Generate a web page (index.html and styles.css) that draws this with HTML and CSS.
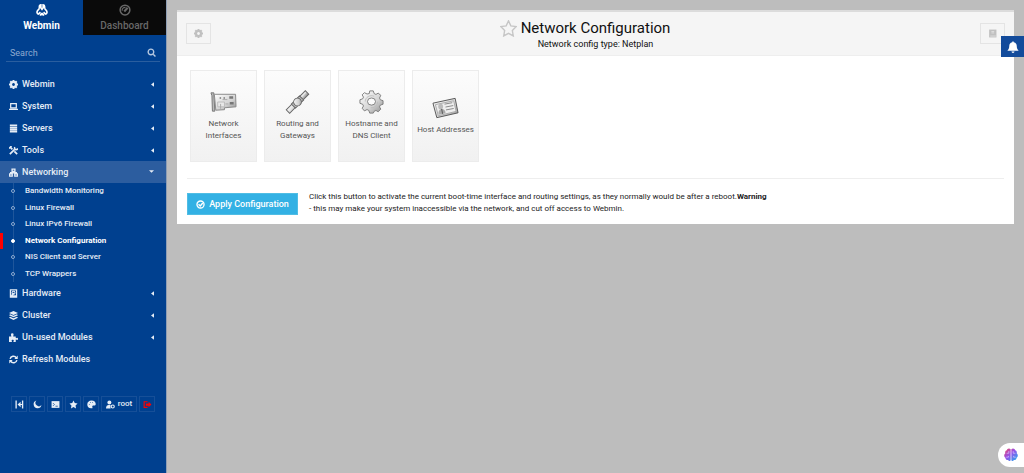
FILE: index.html
```html
<!DOCTYPE html>
<html lang="en">
<head>
<meta charset="utf-8">
<title>Network Configuration</title>
<link rel="stylesheet" href="styles.css">
</head>
<body>
<svg class="defs" aria-hidden="true">
  <defs>
    <linearGradient id="metal" x1="0" y1="0" x2="1" y2="1"><stop offset="0" stop-color="#fff"/><stop offset=".6" stop-color="#d2d2d2"/><stop offset="1" stop-color="#8d8d8d"/></linearGradient>
    <linearGradient id="brain" x1="0" y1="0" x2="1" y2="1"><stop offset="0" stop-color="#f0435f"/><stop offset=".45" stop-color="#9650e8"/><stop offset="1" stop-color="#18b8f0"/></linearGradient>
    <symbol id="cog" viewBox="0 0 16 16"><path fill="none" stroke="currentColor" stroke-width="4" d="M8 3.500a4.500 4.500 0 1 0 .01 0"/><path stroke="currentColor" stroke-width="3.500" d="M8 0v3M8 13v3M0 8h3M13 8h3M2.300 2.300l2.200 2.200M11.500 11.500l2.200 2.200M2.300 13.700l2.200-2.200M11.500 4.500l2.200-2.200"/></symbol>
    <symbol id="left" viewBox="0 0 4 6"><path fill="currentColor" d="M4 0v6L0 3z"/></symbol>
    <symbol id="star" viewBox="0 0 16 16"><path d="M8 .8l2.200 4.700 5 .7-3.600 3.600.9 5.200L8 12.500 3.500 15l.9-5.200L.8 6.200l5-.7z"/></symbol>
  </defs>
</svg>
<div class="layout">
  <aside class="sidebar">
    <nav class="tabs">
      <a class="tab tab-active" href="#">
        <svg class="tab-icon" viewBox="0 0 16 16" fill="none" stroke="currentColor" stroke-width="2.200"><path d="M4.500 6V3.500C4.500 2 5.500 1.200 6.500 1.200V5L8 7l1.500-2V1.200c1 0 2 .8 2 2.300V6M4.500 6L2 9c-1.500 2.500 0 4 1 4.500L6 11M11.500 6L14 9c1.500 2.500 0 4-1 4.500L10 11M5 14.500c1.500 0 3-1 3-3 0 2 1.500 3 3 3"/></svg>
        <span>Webmin</span>
      </a>
      <a class="tab" href="#">
        <svg class="tab-icon" viewBox="0 0 16 16" fill="none" stroke="currentColor" stroke-width="2"><circle cx="8" cy="8" r="6.500"/><path stroke-width="1.500" d="M4.200 9a4 4 0 0 1 4.500-4.500"/><path stroke-width="2.800" d="M7 10L11.500 5"/></svg>
        <span>Dashboard</span>
      </a>
    </nav>
    <form class="search">
      <input class="search-input" type="text" placeholder="Search" aria-label="Search">
      <svg class="search-icon" viewBox="0 0 16 16" fill="none" stroke="currentColor" stroke-width="2.400"><circle cx="7" cy="7" r="5"/><path d="M11 11l4 4"/></svg>
    </form>
    <ul class="menu">
      <li><a class="item" href="#"><svg class="icon"><use href="#cog"/></svg><span>Webmin</span><svg class="caret"><use href="#left"/></svg></a></li>
      <li><a class="item" href="#"><svg class="icon" viewBox="0 0 16 16" fill="none" stroke="currentColor" stroke-width="2.200"><path d="M3 3h10v7.500H3zM0 13.200h16"/></svg><span>System</span><svg class="caret"><use href="#left"/></svg></a></li>
      <li><a class="item" href="#"><svg class="icon" viewBox="0 0 16 16" fill="currentColor"><path d="M1.500 1h13v3.200h-13zM1.500 4.700h13v3.200h-13zM1.500 8.400h13v3.200h-13zM1.500 12.100h13v3.200h-13z"/></svg><span>Servers</span><svg class="caret"><use href="#left"/></svg></a></li>
      <li><a class="item" href="#"><svg class="icon" viewBox="0 0 16 16" fill="none" stroke="currentColor"><path stroke-width="3" d="M2 2l4 4M9.500 9.500L14.500 14.500M1.500 14.500l8.500-8.500"/><path stroke-width="2.800" d="M10.500 2c-1.500 2 0 4.500 2 4.500 1.500 0 3-1 3-2.500M0 4.500l4.500-4.500"/></svg><span>Tools</span><svg class="caret"><use href="#left"/></svg></a></li>
      <li>
        <a class="item item-open" href="#"><svg class="icon" viewBox="0 0 16 16"><path fill="none" stroke="currentColor" stroke-width="2.400" d="M5.500 2h5v4h-5zM1.200 10.500h4.500v4H1.200zM10.300 10.500h4.500v4h-4.500zM8 6v3M3 10V8.500h10V10"/></svg><span>Networking</span><svg class="caret caret-down" viewBox="0 0 6 4"><path fill="currentColor" d="M0 0h6L3 3z"/></svg></a>
        <ul class="submenu">
          <li><a class="subitem" href="#">Bandwidth Monitoring</a></li>
          <li><a class="subitem" href="#">Linux Firewall</a></li>
          <li><a class="subitem" href="#">Linux IPv6 Firewall</a></li>
          <li><a class="subitem subitem-current" href="#">Network Configuration</a></li>
          <li><a class="subitem" href="#">NIS Client and Server</a></li>
          <li><a class="subitem" href="#">TCP Wrappers</a></li>
        </ul>
      </li>
      <li><a class="item" href="#"><svg class="icon" viewBox="0 0 16 16" fill="none" stroke="currentColor"><path stroke-width="2.200" d="M2.500 1.500h11v13h-11z"/><circle cx="8" cy="6.500" r="2.700" stroke-width="1.800"/><path stroke-width="3" d="M3 12.500h10M5 12l3-5"/></svg><span>Hardware</span><svg class="caret"><use href="#left"/></svg></a></li>
      <li><a class="item" href="#"><svg class="icon" viewBox="0 0 16 16" fill="currentColor"><path d="M8 0l8 3.600-8 3.600-8-3.600zM2 5.700l6 2.700 6-2.700 2 1.900-8 3.700-8-3.700zM2 10l6 2.700 6-2.700 2 1.900L8 16l-8-4.100z"/></svg><span>Cluster</span><svg class="caret"><use href="#left"/></svg></a></li>
      <li><a class="item" href="#"><svg class="icon" viewBox="0 0 16 16" fill="currentColor"><path d="M0 6h4c.6-1-.6-1.400-.6-3a2.400 2.400 0 0 1 4.800 0c0 1.600-1.200 2-.6 3H12v3c1 .8 1.300-.6 2.400-.6 2.200 0 2.200 4 0 4-1.100 0-1.400-1.400-2.400-.6V16H8c-.7-1 .6-1.500.6-2.500 0-2-4-2-4 0 0 1 1.100 1.500.4 2.500H0z"/></svg><span>Un-used Modules</span><svg class="caret"><use href="#left"/></svg></a></li>
      <li><a class="item" href="#"><svg class="icon" viewBox="0 0 16 16" fill="none" stroke="currentColor" stroke-width="2.600"><path d="M2 7a6 6 0 0 1 11-2M14 9a6 6 0 0 1-11 2"/><path fill="currentColor" stroke="none" d="M15.500 1v6h-6zM.5 15V9h6z"/></svg><span>Refresh Modules</span></a></li>
    </ul>
    <div class="toolbar">
      <button class="tool" aria-label="Collapse"><svg class="icon" viewBox="0 0 16 16"><path fill="none" stroke="currentColor" stroke-width="2.400" d="M2 1v14M13.500 1v14"/><path fill="currentColor" d="M4.500 8L10 3v4h3v2h-3v4z"/></svg></button>
      <button class="tool" aria-label="Night mode"><svg class="icon" viewBox="0 0 16 16"><path fill="currentColor" d="M6 1a6 6 0 0 0 9 8A7 7 0 1 1 6 1z"/></svg></button>
      <button class="tool" aria-label="Terminal"><svg class="icon" viewBox="0 0 16 16"><path fill="currentColor" d="M1 2h14v12H1z"/><path fill="none" stroke="#00408f" stroke-width="1.300" d="M3.500 5.500L6 8l-2.500 2.500M8 11h4"/></svg></button>
      <button class="tool" aria-label="Favorites"><svg class="icon" fill="currentColor"><use href="#star"/></svg></button>
      <button class="tool" aria-label="Theme"><svg class="icon" viewBox="0 0 16 16"><path fill="currentColor" d="M8 1c5 0 7.500 3 7.500 6 0 4-5 2-6 3.500-.7 1.500 1 2.500 0 4C4 16 .5 12 .5 8c0-4 3-7 7.500-7z"/><g fill="#00408f"><circle cx="4" cy="8" r=".8"/><circle cx="6" cy="4.500" r=".8"/><circle cx="10" cy="4.500" r=".8"/></g></svg></button>
      <button class="tool tool-user"><svg class="icon" viewBox="0 0 16 16"><g fill="currentColor"><circle cx="6" cy="4.500" r="3.500"/><path d="M0 15c0-4 2-6 5-6h3v6z"/></g><circle cx="12" cy="11.500" r="2.700" fill="none" stroke="currentColor" stroke-width="2"/></svg><span>root</span></button>
      <button class="tool tool-exit" aria-label="Log out"><svg class="icon" viewBox="0 0 16 16"><path fill="none" stroke="currentColor" stroke-width="2" d="M8 3H2v10h6"/><path fill="currentColor" d="M5 6h5V3l5 5-5 5v-3H5z"/></svg></button>
    </div>
  </aside>
  <main class="main">
    <section class="panel">
      <header class="panel-head">
        <button class="head-button" aria-label="Module config"><svg class="icon"><use href="#cog"/></svg></button>
        <div class="heading">
          <div class="title-row">
            <svg class="title-star" fill="none" stroke="#c6c6c6" stroke-width="1.300"><use href="#star"/></svg>
            <h1 class="title">Network Configuration</h1>
          </div>
          <p class="subtitle">Network config type: Netplan</p>
        </div>
        <button class="head-button" aria-label="Manual"><svg class="icon" viewBox="0 0 16 16"><path fill="currentColor" d="M2 1h13v14H2z"/><path stroke="#f5f5f5" d="M4 12.500h10M6 4.500h5M6 7h5"/></svg></button>
      </header>
      <div class="panel-body">
        <div class="cards">
          <a class="card" href="#">
            <svg class="card-icon" viewBox="0 0 28 22"><path fill="#bbb" stroke="#777" d="M1 1.500h3l1 19H2.500l-.5-16z"/><path fill="url(#metal)" stroke="#888" d="M4.500 3L26.500 3l.5 13-12 1v2l-9 .5z"/><path fill="#777" d="M20 5h4v2.500h-4zM20.500 11h4v2.500h-4zM10 6h1.500v1.500H10zM14 6h1.500v1.500H14z"/><path fill="#e8e8e8" stroke="#bbb" d="M8 11h7v5H8z"/><path stroke="#aaa" fill="none" d="M13 8.500h5M11 18v-5M16 13h3"/></svg>
            <span>Network Interfaces</span>
          </a>
          <a class="card" href="#">
            <svg class="card-icon" viewBox="0 0 28 22"><g transform="rotate(-45 14 11)" stroke="#666"><path fill="url(#metal)" d="M0 8.500h9v5H0zM19 8.500h9v5h-9z"/><path fill="#bbb" d="M8 8h3v6H8zM17 8h3v6h-3z"/><circle cx="14" cy="11" r="4" fill="url(#metal)"/><path stroke="#eee" d="M1 10h6M21 10h6"/></g></svg>
            <span>Routing and Gateways</span>
          </a>
          <a class="card" href="#">
            <svg class="card-icon" viewBox="1 0 26 27"><path fill="url(#metal)" stroke="#777" stroke-linejoin="round" d="M11.500 4L12 1h4l1 3 2 1 2.500-1.500L24.500 6 23 9l1 2 3 1v4l-3 1-1 2 1.500 2.500-3 3L19 23l-2 1-1 2h-4l-1-3-2-1-3 1.500-2.500-3L5 18l-1-2-3-1v-4l3-1 1-2-1.500-2.500L6 3l3 1.500z"/><ellipse cx="14" cy="13" rx="4.500" ry="4" fill="#fafafa" stroke="#777"/><path fill="none" stroke="#bbb" d="M7 13a7 6.500 0 0 1 10-6M21 13a7 7 0 0 1-8 7"/></svg>
            <span>Hostname and DNS Client</span>
          </a>
          <a class="card" href="#">
            <svg class="card-icon" viewBox="0 0 28 22"><path fill="url(#metal)" stroke="#555" stroke-linejoin="round" d="M1 6l23-5 3 15L5 21z"/><path fill="#eee" stroke="#aaa" d="M3.500 7.500L22.500 3.500l2.500 11L6.500 19z"/><path fill="none" stroke="#888" d="M13 7l8-1.500M14 10l8-1.500M14.500 13l8-1.500"/><ellipse cx="9" cy="9.500" rx="2.500" ry="3" fill="#bbb"/><path fill="#aaa" d="M7 18c-1-4 1-5.500 3-6 2 0 4 1 4 4.500z"/><path fill="none" stroke="#555" d="M10 12l1 5"/></svg>
            <span>Host Addresses</span>
          </a>
        </div>
        <div class="apply">
          <button class="apply-button"><svg class="icon" viewBox="0 0 16 16" fill="none" stroke="currentColor" stroke-width="2.400"><circle cx="8" cy="8" r="6.300"/><path stroke-width="2.600" d="M4.500 7.500L7.500 10.500 12 5.500"/></svg><span>Apply Configuration</span></button>
          <p class="apply-text">Click this button to activate the current boot-time interface and routing settings, as they normally would be after a reboot.<b>Warning</b><br>- this may make your system inaccessible via the network, and cut off access to Webmin.</p>
        </div>
      </div>
    </section>
  </main>
</div>
<button class="bell" aria-label="Notifications"><svg class="bell-icon" viewBox="0 0 16 16"><path fill="currentColor" d="M7 1.500C7 0 9 0 9 1.500c3 .5 4 3 4 5 0 3 1 4.500 2.500 6.500H.5C2 11 3 9.500 3 6.500c0-2 1-4.500 4-5zM6 14h4c0 2.500-4 2.500-4 0z"/></svg></button>
<button class="assistant" aria-label="Assistant"><svg class="brain-icon" viewBox="0 0 16 16"><path fill="url(#brain)" d="M7.600 1.500C6-.3 3.500.8 3.300 2.500 1.500 3 1 4.500 1.500 6-.3 7.500-.2 10 1.600 11c0 2 1.600 3 3 2.800 1 1.700 3 1.300 3-.3zM8.400 1.500c1.600-1.800 4.100-.7 4.300 1 1.800.5 2.300 2 1.800 3.500 1.800 1.500 1.700 4-.1 5 0 2-1.600 3-3 2.800-1 1.700-3 1.300-3-.3z"/><path fill="none" stroke="#d9c4ff" stroke-width=".8" d="M3 6h2.500V3.500M2.500 10.500H5V9M13 6h-2.500V3.500M13.500 10.500H11V9"/></svg></button>
</body>
</html>
```

FILE: styles.css
```css
*, ::before { box-sizing: border-box; }

body {
  margin: 0;
  background: #bdbdbd;
  color: #222;
  font: 9px/12px Roboto, sans-serif;
}

a { color: inherit; text-decoration: none; }
ul { list-style: none; margin: 0; padding: 0; }
p, h1 { margin: 0; }

button {
  display: flex;
  align-items: center;
  justify-content: center;
  padding: 0;
  border: 0;
  background: none;
  color: inherit;
  font: inherit;
}

.defs { position: absolute; width: 0; height: 0; }
.icon { flex: none; width: 9px; height: 9px; }

.layout { display: flex; min-height: 100vh; }

/* Sidebar */
.sidebar {
  flex: none;
  width: 167px;
  border-right: 1px solid #8e9eb5;
  background: #00408f;
  color: #e6edf6;
  font-weight: 500;
}

.tabs { display: grid; grid-template-columns: 1fr 1fr; }

.tab {
  display: flex;
  flex-direction: column;
  align-items: center;
  gap: 2px;
  padding: 4px 0 1px;
  background: #0a0a0a;
  color: #686868;
  font-size: 10px;
  line-height: 16px;
}

.tab-active { background: none; color: #fff; font-weight: 700; }
.tab-icon { width: 12px; height: 12px; }

.search {
  display: flex;
  align-items: center;
  height: 18px;
  margin: 9px 6px 11px;
  padding: 0 4px;
  border-bottom: 1px solid #2a5e9f;
}

.search-input {
  flex: 1;
  min-width: 0;
  padding: 0;
  border: 0;
  outline: 0;
  background: none;
  color: #fff;
  font: inherit;
  font-weight: 400;
}

.search-input::placeholder { color: #8eabd0; opacity: 1; }
.search-icon { width: 9px; height: 9px; color: #b5c8e0; }

.item {
  display: flex;
  align-items: center;
  gap: 4px;
  height: 22px;
  padding: 0 12px 0 9px;
}

.item-open { background: #2c5d9f; }
.caret { width: 3px; height: 5px; margin-left: auto; }
.caret-down { width: 5px; height: 4px; }

.submenu {
  display: grid;
  grid-auto-rows: 1fr;
  height: 99px;
  background: linear-gradient(#1f569b, #1f569b) 13px 0 / 1px 100% no-repeat;
  font-size: 8px;
}

.subitem {
  display: flex;
  align-items: center;
  gap: 10px;
  height: 100%;
  padding-left: 11px;
}

.subitem::before {
  content: "";
  width: 4px;
  height: 4px;
  border: 1px solid #8eabd0;
  border-radius: 50%;
  background: #00408f;
}

.subitem-current {
  padding-left: 8px;
  border-left: 3px solid #f00;
  color: #fff;
  font-weight: 700;
}

.subitem-current::before { border-color: #fff; background: #fff; }

.toolbar { display: flex; gap: 2px; margin: 26px 11px 0; font-size: 8px; }

.tool {
  width: 16px;
  height: 16px;
  border: 1px solid #164f98;
}

.tool-user { gap: 3px; width: 36px; }
.tool-exit { color: #f00; }

/* Content */
.main { flex: 1; min-width: 0; padding: 10px 10px 0; }

.panel {
  border-top: 2px solid #dcdcdc;
  background: #fff;
}

.panel-head {
  display: flex;
  align-items: flex-start;
  padding: 6px 9px 5px;
  border-bottom: 1px solid #eee;
  background: #f5f5f5;
}

.head-button {
  width: 25px;
  height: 21px;
  margin-top: 5px;
  border: 1px solid #e4e4e4;
  color: #c0c0c0;
}

.heading { flex: 1; color: #111; text-align: center; }

.title-row {
  display: grid;
  grid-template-columns: 1fr auto 1fr;
  align-items: center;
  gap: 4px;
}

.title { font-size: 15px; font-weight: 400; line-height: 20px; }
.title-star { justify-self: end; width: 17px; height: 17px; }
.panel-body { padding: 14px 10px 9px; }
.cards { display: flex; gap: 7px; padding: 0 3px; }

.card {
  display: flex;
  flex-direction: column;
  align-items: center;
  justify-content: center;
  gap: 4px;
  width: 67px;
  height: 92px;
  border: 1px solid #ececec;
  background: linear-gradient(#fcfcfc, #f1f1f1);
  color: #555;
  font-size: 8px;
  text-align: center;
}

.card-icon { width: 27px; height: 24px; }

.apply {
  display: flex;
  align-items: flex-start;
  gap: 11px;
  margin-top: 16px;
  padding-top: 12px;
  border-top: 1px solid #eee;
}

.apply-text { font-size: 8px; }

.apply-button {
  flex: none;
  gap: 4px;
  width: 111px;
  height: 22px;
  margin-top: 2px;
  border: 1px solid #50bde4;
  background: #33b1e4;
  color: #fff;
  font-weight: 500;
}

/* Floating controls */
.bell {
  position: fixed;
  top: 36px;
  right: 0;
  width: 23px;
  height: 21px;
  background: #134b9b;
  color: #fff;
}

.bell-icon { width: 12px; height: 12px; }

.assistant {
  position: fixed;
  right: 0;
  bottom: 6px;
  width: 26px;
  height: 24px;
  border-radius: 12px 0 0 12px;
  background: #fff;
}

.brain-icon { width: 14px; height: 14px; }
```
